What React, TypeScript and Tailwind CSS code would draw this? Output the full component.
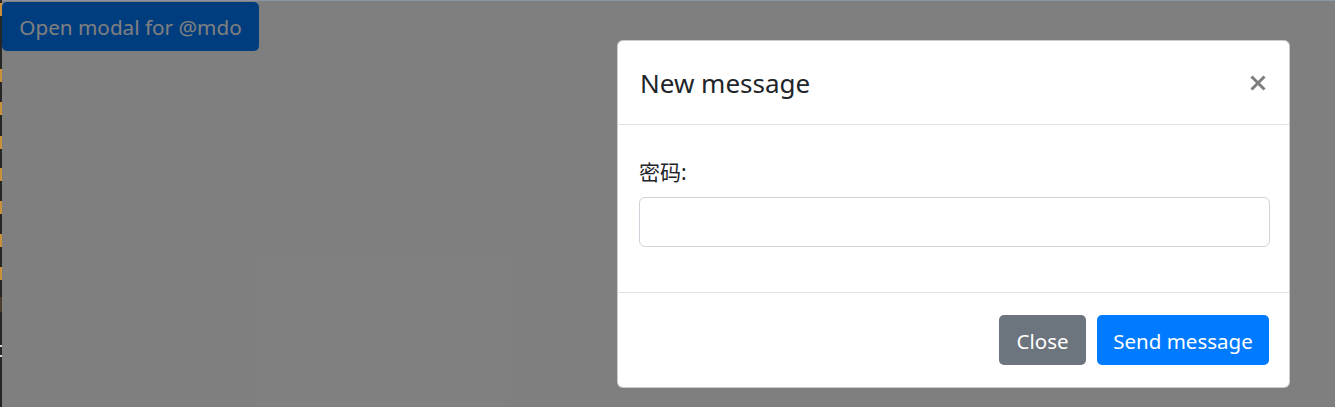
import { useState } from "react";

const dashes = [3, 69, 102, 136, 168, 201, 234, 267];

export default function App() {
  const [value, setValue] = useState("");

  return (
    <div
      className="relative h-[407px] w-full overflow-hidden bg-white"
      style={{ fontFamily: '"Noto Sans", "Noto Sans CJK SC", sans-serif' }}
    >
      {/* page behind the backdrop */}
      <div className="flex pl-[2px] pt-[2px]">
        <button className="h-[49px] w-[257px] rounded-[5px] bg-[#007bff] pt-[2px] text-[20.7px] text-white">
          Open modal for @mdo
        </button>
      </div>

      {/* backdrop */}
      <div className="absolute inset-0 bg-black/50" />
      <div className="absolute left-0 right-0 top-0 h-px bg-[#8a96a6]" />

      {/* left edge strip */}
      <div className="absolute bottom-0 left-0 top-0 w-[2px] bg-[#262626]">
        {dashes.map((y) => (
          <div key={y} className="absolute left-0 h-[13px] w-[2px] bg-[#c8913a]" style={{ top: y }} />
        ))}
        <div className="absolute left-0 top-[297px] h-[15px] w-[2px] bg-[#4a3d2c]" />
        <div className="absolute left-0 top-[345px] h-[2px] w-[2px] bg-[#d0d0d0]" />
        <div className="absolute left-0 top-[355px] h-[2px] w-[2px] bg-[#d0d0d0]" />
      </div>

      {/* modal */}
      <div className="absolute left-[617px] top-[40px] w-[673px] rounded-[6px] border border-black/20 bg-white text-[#212529]">
        <div className="flex h-[84px] items-center justify-between border-b border-[#dee2e6] pl-[22px] pr-[23px]">
          <h5 className="pt-[2px] text-[26px] leading-[41px] font-normal">New message</h5>
          <button aria-label="Close" className="flex h-[16px] w-[16px] items-center justify-center opacity-50">
            <svg width="16" height="16" viewBox="0 0 16 16">
              <path d="M1.5 1.5 L14.5 14.5 M14.5 1.5 L1.5 14.5" stroke="#000" strokeWidth="3" />
            </svg>
          </button>
        </div>

        <div className="flex flex-col pb-[45px] pl-[21px] pr-[19px] pt-[31px]">
          <label className="mb-[8px] text-[21px] leading-[33px]">密码:</label>
          <input
            value={value}
            onChange={(e) => setValue(e.target.value)}
            className="h-[50px] w-full rounded-[6px] border border-[#ced4da] px-[16px] text-[21px] outline-none"
          />
        </div>

        <div className="flex items-center justify-end gap-[11px] border-t border-[#dee2e6] pb-[22px] pr-[20px] pt-[22px]">
          <button className="h-[50px] w-[87px] rounded-[5px] bg-[#6c757d] pt-[3px] text-[20.5px] text-white">Close</button>
          <button className="h-[50px] w-[172px] rounded-[5px] bg-[#007bff] pt-[3px] text-[20.5px] text-white">Send message</button>
        </div>
      </div>
    </div>
  );
}
